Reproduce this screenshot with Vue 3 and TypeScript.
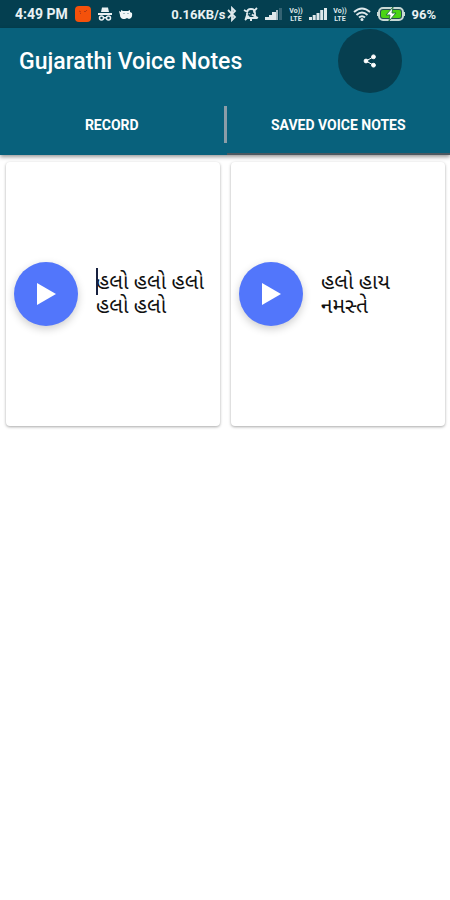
<script setup lang="ts">
import { ref } from 'vue'

interface VoiceNote {
  id: number
  text: string
  editing: boolean
}

const activeTab = ref<'record' | 'saved'>('saved')
const notes = ref<VoiceNote[]>([
  { id: 1, text: 'હલો હલો હલો હલો હલો', editing: true },
  { id: 2, text: 'હલો હાય નમસ્તે', editing: false },
])
</script>

<template>
  <div class="app">
    <div class="status">
      <div class="status-left">
        <span class="clock">4:49 PM</span>
        <svg width="16" height="16" viewBox="0 0 16 16">
          <rect width="16" height="16" rx="4" fill="#f4510b" />
          <path d="M4 5l2 1M9 5l1 1 2-2M5 7l1 1" fill="none" stroke="#b63a12" />
        </svg>
        <svg width="14" height="16" viewBox="0 0 14 16" fill="#e9f1f3">
          <path d="M3 6l1-4.500h6L11 6zM0 7h14v2H0z" />
          <circle cx="3.500" cy="12" r="2" fill="none" stroke="#e9f1f3" stroke-width="1.500" />
          <circle cx="10.500" cy="12" r="2" fill="none" stroke="#e9f1f3" stroke-width="1.500" />
          <path d="M5 11h4v1.500H5z" />
        </svg>
        <svg width="14" height="16" viewBox="0 0 14 16">
          <path d="M0 5l2 1V4l2 1h5l2-1v2l2 1q1 5-3 6l-2-1-2 1H4q-3-1-3-4z" fill="#f2f7f8" />
          <path d="M5 7v1M9 7v1" stroke="#5f8390" />
        </svg>
      </div>
      <div class="status-right">
        <div class="network">
          <span class="small">0.16KB/s</span>
          <svg width="10" height="16" viewBox="0 0 10 16" fill="none" stroke="#dfe9ec" stroke-width="1.800">
            <path d="M1 4l7 7-3 3V2l3 3-7 7" />
          </svg>
        </div>
        <svg width="16" height="16" viewBox="0 0 16 16" fill="none" stroke="#dfe9ec" stroke-width="1.800">
          <path d="M3 12l1-3V7q0-4 4-4t4 4v2l1 3zM7 14h2M1 4l14 8M14 2L2 14" />
          <path d="M5 7l5-2M6 10l4-4" stroke="#043f50" />
        </svg>
        <svg width="18" height="16" viewBox="0 0 18 16">
          <path d="M0 14h4v-3H0zM4 14h3V9H4zM7 14h4V6H7z" fill="#dfe9ec" />
          <path d="M11 14h2V4h-2z" fill="#a5bac2" />
          <path d="M14 14h3V2h-3z" fill="#346373" />
        </svg>
        <svg class="volte" width="14" height="16" viewBox="0 0 14 16">
          <text x="7" y="7" text-anchor="middle">Vo))</text>
          <text x="7" y="15" text-anchor="middle">LTE</text>
        </svg>
        <svg width="18" height="16" viewBox="0 0 18 16" fill="#dfe9ec">
          <path d="M0 14h3v-3H0zM3.700 14h3V9h-3zM7.500 14h3V7h-3zM11.200 14h3V4h-3zM15 14h3V2h-3z" />
        </svg>
        <svg class="volte" width="14" height="16" viewBox="0 0 14 16">
          <text x="7" y="7" text-anchor="middle">Vo))</text>
          <text x="7" y="15" text-anchor="middle">LTE</text>
        </svg>
        <svg width="18" height="16" viewBox="0 0 18 16" fill="none" stroke="#dfe9ec" stroke-width="2">
          <path d="M1 6q8-7 16 0M3.500 9q5.500-5 11 0M6 11.500q3-2.500 6 0" />
          <circle cx="9" cy="13.500" r="1.500" fill="#dfe9ec" stroke="none" />
        </svg>
        <svg width="28" height="16" viewBox="0 0 28 16">
          <rect x="2" y="2" width="24" height="12" rx="4" fill="#234f50" stroke="#c9d9d5" stroke-width="2" />
          <rect x="4" y="4" width="20" height="8" rx="2" fill="#4bd415" />
          <path d="M1 6v4M27 6v4" stroke="#c9d9d5" stroke-width="2" />
          <path d="M16 1L9 9h4l-1 6 7-8h-4z" fill="#fff" stroke="#2c7941" />
        </svg>
        <span class="small">96%</span>
      </div>
    </div>

    <header class="header">
      <div class="toolbar">
        <h1>Gujarathi Voice Notes</h1>
        <button class="share" type="button" aria-label="Share">
          <svg width="14" height="14" viewBox="0 0 14 14" fill="#fff" stroke="#fff">
            <path d="M10.500 2.800L3 7l7.500 4.200" fill="none" />
            <circle cx="3" cy="7" r="1.900" />
            <circle cx="10.500" cy="2.800" r="1.900" />
            <circle cx="10.500" cy="11.200" r="1.900" />
          </svg>
        </button>
      </div>
      <nav class="tabs">
        <button type="button" :class="{ active: activeTab === 'record' }" @click="activeTab = 'record'">RECORD</button>
        <span class="divider"></span>
        <button type="button" :class="{ active: activeTab === 'saved' }" @click="activeTab = 'saved'">SAVED VOICE NOTES</button>
      </nav>
    </header>

    <main class="notes">
      <article v-for="note in notes" :key="note.id" class="card">
        <button class="play" type="button" aria-label="Play">
          <svg width="20" height="22" viewBox="0 0 20 22"><path d="M1 0l19 11L1 22z" fill="#fff" /></svg>
        </button>
        <div class="field">
          <span v-if="note.editing" class="caret"></span>
          <textarea v-model="note.text" rows="2" lang="gu" spellcheck="false" aria-label="Note text"></textarea>
        </div>
      </article>
    </main>
  </div>
</template>

<style>
body {
  background: #fff;
}
</style>

<style scoped>
.app {
  font-family: Roboto, "Noto Sans", sans-serif;
  color: #fff;
}
svg {
  display: block;
  flex: none;
}
button {
  border: 0;
  padding: 0;
  font: inherit;
  color: inherit;
  background: none;
  cursor: pointer;
}
.status {
  display: flex;
  justify-content: space-between;
  align-items: center;
  height: 28px;
  padding: 0 14px 0 15px;
  background: #043f50;
  color: #e9f1f3;
  font-size: 14px;
  font-weight: 700;
  white-space: nowrap;
}
.status-left,
.status-right {
  display: flex;
  align-items: center;
  gap: 6px;
}
.status-left {
  gap: 7px;
}
.network {
  display: flex;
  align-items: center;
  gap: 2px;
}
.small {
  font-size: 13px;
}
.volte text {
  font-size: 7px;
  font-weight: 700;
  fill: #dfe9ec;
}
.header {
  position: relative;
  background: #08617c;
  box-shadow: 0 2px 4px rgba(0, 0, 0, 0.4);
}
.toolbar {
  display: flex;
  align-items: center;
  justify-content: space-between;
  height: 66px;
  padding: 0 48px 0 19px;
}
h1 {
  margin: 0;
  font-size: 23px;
  font-weight: 500;
}
.share {
  display: grid;
  place-items: center;
  width: 64px;
  height: 64px;
  border-radius: 50%;
  background: #063f50;
}
.tabs {
  display: flex;
  align-items: center;
  height: 61px;
}
.tabs button {
  flex: 1 1 0;
  height: 61px;
  padding-top: 2px;
  font-size: 14px;
  font-weight: 700;
  border-bottom: 2px solid transparent;
}
.tabs .active {
  border-bottom-color: #4c5961;
}
.divider {
  width: 3px;
  height: 37px;
  background: #8b9da8;
}
.notes {
  display: grid;
  grid-template-columns: 1fr 1fr;
  gap: 11px;
  padding: 7px 5px 7px 6px;
}
.card {
  display: flex;
  align-items: center;
  gap: 18px;
  height: 264px;
  padding: 0 12px 0 8px;
  box-sizing: border-box;
  min-width: 0;
  border-radius: 4px;
  background: #fff;
  box-shadow: 0 1px 3px rgba(0, 0, 0, 0.35);
}
.play {
  display: grid;
  place-items: center;
  flex: none;
  width: 64px;
  height: 64px;
  border-radius: 50%;
  background: #5276fb;
  box-shadow: 0 3px 8px rgba(0, 0, 0, 0.2);
}
.field {
  position: relative;
  flex: 1;
  min-width: 0;
}
textarea {
  display: block;
  width: 100%;
  height: 48px;
  padding: 0;
  border: 0;
  outline: 0;
  resize: none;
  overflow: hidden;
  background: none;
  color: #111;
  font-family: Roboto, "Noto Sans Gujarati", "Noto Sans", sans-serif;
  font-size: 21px;
  line-height: 24px;
}
.caret {
  position: absolute;
  left: 0;
  top: -2px;
  width: 2px;
  height: 27px;
  background: #17213f;
}
</style>
